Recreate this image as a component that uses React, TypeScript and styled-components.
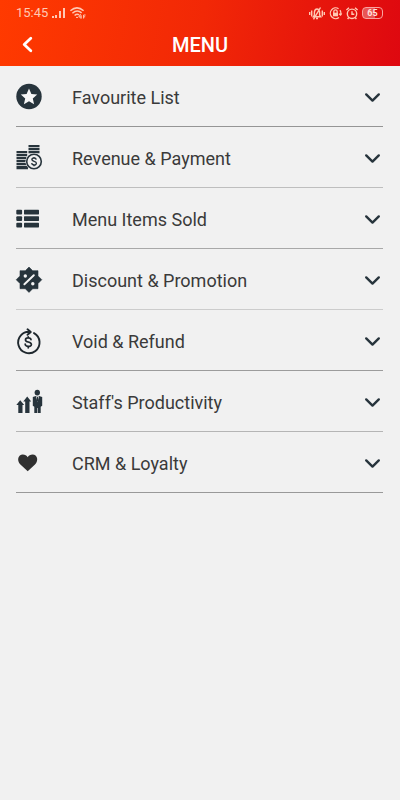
import React from "react";
import styled, { createGlobalStyle } from "styled-components";

const GlobalStyle = createGlobalStyle`
  * { box-sizing: border-box; }
  html, body { margin: 0; background: #f1f1f1; }
  body, button { font-family: Roboto, "Liberation Sans", sans-serif; }
`;

const Screen = styled.div`
  min-height: 100vh;
  background: #f1f1f1;
`;

const TopArea = styled.header`
  background: linear-gradient(100deg, #ff3a00 0%, #f22806 50%, #de0810 100%);
`;

const StatusBar = styled.div`
  display: flex;
  align-items: center;
  justify-content: space-between;
  height: 24px;
  padding: 2px 17px 0 16px;
  color: #ffc8b4;
`;

const StatusGroup = styled.div`
  display: flex;
  align-items: center;
  gap: 4px;
`;

const Clock = styled.time`
  font-size: 13px;
  line-height: 16px;
`;

const Battery = styled.span`
  display: flex;
  align-items: center;
  justify-content: center;
  width: 21px;
  height: 12px;
  border: 1px solid #f9a3a0;
  border-radius: 4px;
  background: linear-gradient(90deg, #e95554 65%, transparent 65%);
  color: #ffe0dc;
  font-size: 9px;
  font-weight: 700;
  line-height: 10px;
`;

const TitleBar = styled.div`
  display: grid;
  grid-template-columns: 56px 1fr 56px;
  align-items: center;
  height: 42px;
`;

const BackButton = styled.button`
  display: flex;
  align-items: center;
  width: 56px;
  height: 40px;
  padding: 0 0 0 20px;
  border: 0;
  background: none;
  color: #fff;
  cursor: pointer;
`;

const Title = styled.h1`
  margin: 0;
  color: #fff;
  font-size: 20px;
  font-weight: 500;
  line-height: 24px;
  text-align: center;
`;

const MenuList = styled.ul`
  margin: 0;
  padding: 0 17px 0 16px;
  list-style: none;
`;

const MenuItem = styled.li<{ $line: string }>`
  border-bottom: 1px solid ${(p) => p.$line};
`;

const MenuButton = styled.button`
  display: grid;
  grid-template-columns: 56px 1fr 20px;
  align-items: center;
  width: 100%;
  height: 60px;
  padding: 2px 0 0;
  border: 0;
  background: none;
  color: #3a3a3a;
  font-size: 18px;
  line-height: 24px;
  text-align: left;
  cursor: pointer;
`;

const Label = styled.span`
  padding-top: 2px;
`;

const Glyph = styled.svg`
  display: block;
  overflow: visible;
`;

const INK = "#27343c";

const SignalIcon = () => (
  <Glyph width="14" height="12" viewBox="0 0 14 12" fill="currentColor" aria-hidden="true">
    <path d="M0 9h2v2H0zM3 8h2v3H3zM7 4h2v7H7zM11 1h2v10h-2z" />
  </Glyph>
);

const WifiIcon = () => (
  <Glyph width="16" height="12" viewBox="0 0 16 12" fill="none" stroke="currentColor" strokeWidth="1.5" aria-hidden="true">
    <path d="M.4 3.8Q7 -2.1 13.6 3.8M2.4 6.2Q7 2.1 11.6 5.9M4.6 8.5Q7 6.3 9 7.9" />
    <path d="M6 10.4h2M10.6 7 8.8 10h3M11 8v3.8M13.6 11.5V8h2M13.6 9.8h1.6" strokeWidth="1" />
  </Glyph>
);

const VibrateIcon = () => (
  <Glyph width="16" height="13" viewBox="0 0 16 13" fill="none" stroke="currentColor" strokeWidth="1.4" aria-hidden="true">
    <path d="M.7 5v3M2.7 3.5v6M15.3 5v3M13.3 3.5v6M4.3 9.8h7.4L10.6 8V5.2Q10.3 2 8 2T5.4 5.2V8zM7 11.5h2M11.5.5 4.5 12.3" />
  </Glyph>
);

const RotationLockIcon = () => (
  <Glyph width="13" height="13" viewBox="0 0 13 13" fill="none" stroke="currentColor" strokeWidth="1.3" aria-hidden="true">
    <path d="M9.6 1.7A5.4 5.4 0 1 0 10 10.6M11 3.2a5.4 5.4 0 0 1 .7 4.5M10 6.8l1.6 1.2 1.1-1.6M4.8 6V4.5a1.7 1.7 0 0 1 3.4 0V6" />
    <path d="M4 5.7h5v3.6H4z" fill="currentColor" stroke="none" />
  </Glyph>
);

const AlarmIcon = () => (
  <Glyph width="12" height="13" viewBox="0 0 12 13" fill="none" stroke="currentColor" strokeWidth="1.4" aria-hidden="true">
    <circle cx="6" cy="6.8" r="4.7" />
    <path d="M.4 3 3 .7M11.6 3 9 .7M6 4.3v2.9h2.3M2.8 10.5 1.6 12M9.2 10.5l1.2 1.5" />
  </Glyph>
);

const BackIcon = () => (
  <Glyph width="14" height="18" viewBox="0 0 14 18" fill="none" stroke="currentColor" strokeWidth="2.8" strokeLinecap="round" strokeLinejoin="round" aria-hidden="true">
    <path d="M10.8 2.2 4.2 8.5l6.6 6.3" />
  </Glyph>
);

const ChevronIcon = () => (
  <Glyph width="20" height="20" viewBox="0 0 20 20" fill="none" stroke={INK} strokeWidth="2.4" strokeLinecap="round" strokeLinejoin="round" aria-hidden="true">
    <path d="m3.2 7.4 6.3 6.2 6.3-6.2" />
  </Glyph>
);

const IconFrame = ({ children }: { children: React.ReactNode }) => (
  <Glyph width="26" height="26" viewBox="0 0 26 26" fill={INK} aria-hidden="true">
    {children}
  </Glyph>
);

const StarIcon = () => (
  <IconFrame>
    <circle cx="13" cy="12.5" r="12.7" />
    <path d="m13 4.5 2.4 5.4 5.8.6-4.4 3.9 1.3 5.8-5.1-3-5.1 3 1.3-5.8-4.4-3.9 5.8-.6z" fill="#f7f7f7" />
  </IconFrame>
);

const CoinsIcon = () => (
  <IconFrame>
    <path d="M12.5 0h11v2.3h-11zM12.5 3h11v2.3h-11zM12.5 6h11v2.3h-11zM.5 6h10.7v2.3H.5zM.5 9h10.7v2.3H.5zM.5 12h10v2.3H.5zM.5 15h9.5v2.3H.5zM.5 18h10v2.3H.5zM.5 21h11.5v3.3H.5z" />
    <circle cx="18" cy="16.5" r="8.6" fill="#f1f1f1" />
    <circle cx="18" cy="16.5" r="7.3" fill="#f1f1f1" stroke={INK} strokeWidth="1.6" />
    <path d="M20.2 14.6c-.2-2.1-4.3-2.1-4.3 0 0 2.3 4.5 1.3 4.5 3.7 0 2.2-4.5 2.2-4.8-.1M18 12v1.3M18 19.8v1.4" fill="none" stroke={INK} strokeWidth="1.4" />
  </IconFrame>
);

const ListIcon = () => (
  <IconFrame>
    {[3.7, 10.2, 16.7].map((y) => (
      <React.Fragment key={y}>
        <rect x="0.3" y={y} width="5.8" height="4.7" rx="1" />
        <rect x="8" y={y} width="15" height="4.7" rx="0.6" />
      </React.Fragment>
    ))}
  </IconFrame>
);

const DiscountIcon = () => (
  <IconFrame>
    <path d="m13 0 3.7 3.7H22v5.2l3.8 3.8L22 16.5v5.2h-5.3L13 25.4l-3.7-3.7H4v-5.2L.2 12.7 4 8.9V3.7h5.3z" stroke={INK} strokeWidth="0.6" strokeLinejoin="round" />
    <path d="M8.4 17.2 17.8 8.2" stroke="#f4f4f4" strokeWidth="2" strokeLinecap="round" />
    <circle cx="9.3" cy="9" r="1.7" fill="#f4f4f4" />
    <circle cx="16.8" cy="16.8" r="1.7" fill="#f4f4f4" />
  </IconFrame>
);

const RefundIcon = () => (
  <IconFrame>
    <g fill="none" stroke="#1f282e" strokeWidth="1.9" strokeLinecap="round" strokeLinejoin="round">
      <path d="M14.4 3.9A10.7 10.7 0 1 0 18 5.1M11.5 1.3l3.3 2.7-3.3 2.8" />
      <path d="M15 11.7c-.3-2.4-5.5-2.4-5.5.2 0 2.7 5.9 1.6 5.9 4.5 0 2.7-6 2.5-6.2-.2M12.2 8.8v1.1M12.2 18.4v1.4" strokeWidth="1.7" />
    </g>
  </IconFrame>
);

const StaffIcon = () => (
  <IconFrame>
    <path d="m4.2 11.2 4 4.8H6.5v8.1H2.3V16H.3zM11.2 7.6l4 4.8h-1.7v11.7H9.2V12.4H7.3z" />
    <ellipse cx="21.3" cy="3.6" rx="2.7" ry="2.9" />
    <path d="M16.8 8 20 7.1h3l3.2 1v8.7l-1.5 1v6.3h-2.9v-5h-.6v5h-2.9v-6.3l-1.5-1z" />
    <path d="m20 7.2 1.5 6 1.5-6z" fill="#f1f1f1" />
    <path d="m21 8 1 0 .4 3-.9 2-.9-2z" />
  </IconFrame>
);

const HeartIcon = () => (
  <IconFrame>
    <path d="M11.7 21.3 4.4 14.5C.5 10.8 2 4.6 6.8 4.6c2.2 0 3.9 1.1 4.9 2.7 1-1.6 2.7-2.7 4.9-2.7 4.8 0 6.3 6.2 2.4 9.9z" fill="#303030" />
  </IconFrame>
);

const items = [
  { label: "Favourite List", Icon: StarIcon, line: "#959595" },
  { label: "Revenue & Payment", Icon: CoinsIcon, line: "#bebebe" },
  { label: "Menu Items Sold", Icon: ListIcon, line: "#a8a8a8" },
  { label: "Discount & Promotion", Icon: DiscountIcon, line: "#cccccc" },
  { label: "Void & Refund", Icon: RefundIcon, line: "#9c9c9c" },
  { label: "Staff's Productivity", Icon: StaffIcon, line: "#b5b5b5" },
  { label: "CRM & Loyalty", Icon: HeartIcon, line: "#999999" },
];

export default function App() {
  return (
    <Screen>
      <GlobalStyle />
      <TopArea>
        <StatusBar>
          <StatusGroup>
            <Clock>15:45</Clock>
            <SignalIcon />
            <WifiIcon />
          </StatusGroup>
          <StatusGroup>
            <VibrateIcon />
            <RotationLockIcon />
            <AlarmIcon />
            <Battery>65</Battery>
          </StatusGroup>
        </StatusBar>
        <TitleBar>
          <BackButton type="button" aria-label="Back">
            <BackIcon />
          </BackButton>
          <Title>MENU</Title>
        </TitleBar>
      </TopArea>
      <main>
        <MenuList>
          {items.map(({ label, Icon, line }) => (
            <MenuItem key={label} $line={line}>
              <MenuButton type="button" aria-expanded={false}>
                <Icon />
                <Label>{label}</Label>
                <ChevronIcon />
              </MenuButton>
            </MenuItem>
          ))}
        </MenuList>
      </main>
    </Screen>
  );
}
